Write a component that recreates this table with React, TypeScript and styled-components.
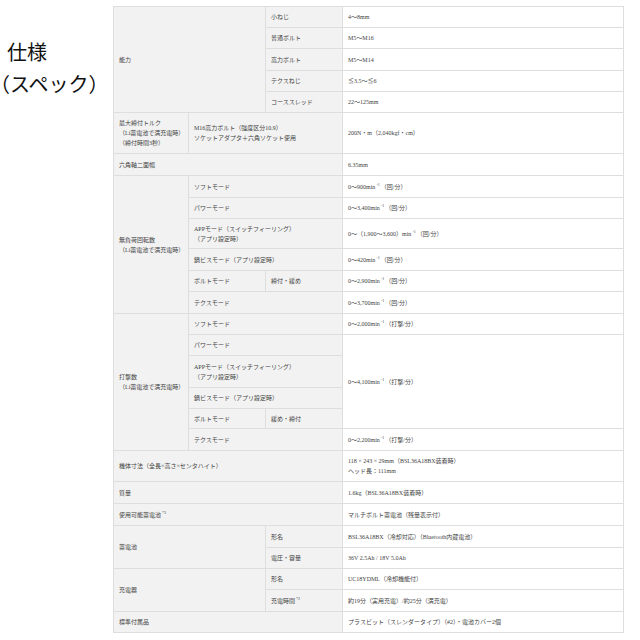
import React from "react";
import styled, { createGlobalStyle } from "styled-components";

const GlobalStyle = createGlobalStyle`
  html, body {
    margin: 0;
    padding: 0;
    background: #ffffff;
  }
`;

const Page = styled.div`
  display: flex;
  align-items: flex-start;
  width: 640px;
  height: 640px;
  overflow: hidden;
`;

const Heading = styled.h2`
  flex: 0 0 113px;
  margin: 0;
  padding: 36px 0 0 0;
  box-sizing: border-box;
  font-family: "Noto Sans CJK JP", sans-serif;
  font-size: 20px;
  font-weight: 400;
  line-height: 32px;
  color: #111111;
`;

const HeadingLine = styled.span<{ $indent?: number }>`
  display: block;
  white-space: nowrap;
  padding-left: ${(p) => p.$indent ?? 0}px;
`;

/* opening bracket without its leading blank half */
const Bracket = styled.span`
  font-feature-settings: "halt";
`;

const SpecTable = styled.table`
  margin-top: 6px;
  width: 510px;
  table-layout: fixed;
  border-collapse: collapse;
  font-family: "Liberation Serif", "Noto Sans CJK JP", serif;
  font-size: 6px;
  line-height: 10px;
  color: #444444;
`;

const Row = styled.tr<{ $h: number }>`
  height: ${(p) => p.$h}px;
`;

const Label = styled.th`
  background: #f2f2f2;
  border: 1px solid #dedede;
  font-weight: 400;
  text-align: left;
  vertical-align: middle;
  padding: 0 5px;
  white-space: nowrap;
`;

const Value = styled.td`
  background: #ffffff;
  border: 1px solid #dedede;
  vertical-align: middle;
  padding: 0 5px;
  white-space: nowrap;
`;

const Sup = styled.sup`
  font-size: 4px;
  line-height: 0;
  vertical-align: super;
  margin: 0 1px;
`;

const rpm = (v: string, unit: string) => (
  <>
    {v}min<Sup>-1</Sup>（{unit}）
  </>
);

const App: React.FC = () => {
  return (
    <Page>
      <GlobalStyle />
      <Heading>
        <HeadingLine $indent={7}>仕様</HeadingLine>
        <HeadingLine>
          <Bracket>（</Bracket>スペック）
        </HeadingLine>
      </Heading>
      <SpecTable>
        <colgroup>
          <col style={{ width: 75 }} />
          <col style={{ width: 77 }} />
          <col style={{ width: 77 }} />
          <col style={{ width: 281 }} />
        </colgroup>
        <tbody>
          <Row $h={21}>
            <Label colSpan={2} rowSpan={5}>能力</Label>
            <Label>小ねじ</Label>
            <Value>4～8mm</Value>
          </Row>
          <Row $h={21}>
            <Label>普通ボルト</Label>
            <Value>M5～M16</Value>
          </Row>
          <Row $h={22}>
            <Label>高力ボルト</Label>
            <Value>M5～M14</Value>
          </Row>
          <Row $h={21}>
            <Label>テクスねじ</Label>
            <Value>≦3.5～≦6</Value>
          </Row>
          <Row $h={21}>
            <Label>コーススレッド</Label>
            <Value>22～125mm</Value>
          </Row>

          <Row $h={41}>
            <Label>
              最大締付トルク
              <br />
              （Li蓄電池で満充電時）
              <br />
              （締付時間3秒）
            </Label>
            <Label colSpan={2}>
              M16高力ボルト（強度区分10.9）
              <br />
              ソケットアダプタ＋六角ソケット使用
            </Label>
            <Value>200N・m（2,040kgf・cm）</Value>
          </Row>

          <Row $h={22}>
            <Label colSpan={3}>六角軸二面幅</Label>
            <Value>6.35mm</Value>
          </Row>

          <Row $h={22}>
            <Label rowSpan={6}>
              無負荷回転数
              <br />
              （Li蓄電池で満充電時）
            </Label>
            <Label colSpan={2}>ソフトモード</Label>
            <Value>{rpm("0～900", "回/分")}</Value>
          </Row>
          <Row $h={21}>
            <Label colSpan={2}>パワーモード</Label>
            <Value>{rpm("0～3,400", "回/分")}</Value>
          </Row>
          <Row $h={30}>
            <Label colSpan={2}>
              APPモード（スイッチフィーリング）
              <br />
              （アプリ設定時）
            </Label>
            <Value>{rpm("0～（1,900～3,600）", "回/分")}</Value>
          </Row>
          <Row $h={22}>
            <Label colSpan={2}>鍋ビスモード（アプリ設定時）</Label>
            <Value>{rpm("0～420", "回/分")}</Value>
          </Row>
          <Row $h={21}>
            <Label>ボルトモード</Label>
            <Label>締付・緩め</Label>
            <Value>{rpm("0～2,900", "回/分")}</Value>
          </Row>
          <Row $h={22}>
            <Label colSpan={2}>テクスモード</Label>
            <Value>{rpm("0～3,700", "回/分")}</Value>
          </Row>

          <Row $h={21}>
            <Label rowSpan={6}>
              打撃数
              <br />
              （Li蓄電池で満充電時）
            </Label>
            <Label colSpan={2}>ソフトモード</Label>
            <Value>{rpm("0～2,000", "打撃/分")}</Value>
          </Row>
          <Row $h={21}>
            <Label colSpan={2}>パワーモード</Label>
            <Value rowSpan={4}>{rpm("0～4,100", "打撃/分")}</Value>
          </Row>
          <Row $h={32}>
            <Label colSpan={2}>
              APPモード（スイッチフィーリング）
              <br />
              （アプリ設定時）
            </Label>
          </Row>
          <Row $h={21}>
            <Label colSpan={2}>鍋ビスモード（アプリ設定時）</Label>
          </Row>
          <Row $h={20}>
            <Label>ボルトモード</Label>
            <Label>緩め・締付</Label>
          </Row>
          <Row $h={22}>
            <Label colSpan={2}>テクスモード</Label>
            <Value>{rpm("0～2,200", "打撃/分")}</Value>
          </Row>

          <Row $h={31}>
            <Label colSpan={3}>機体寸法（全長×高さ×センタハイト）</Label>
            <Value>
              118 × 243 × 29mm（BSL36A18BX装着時）
              <br />
              ヘッド長：111mm
            </Value>
          </Row>
          <Row $h={22}>
            <Label colSpan={3}>質量</Label>
            <Value>1.6kg（BSL36A18BX装着時）</Value>
          </Row>
          <Row $h={22}>
            <Label colSpan={3}>
              使用可能蓄電池<Sup>*3</Sup>
            </Label>
            <Value>マルチボルト蓄電池（残量表示付）</Value>
          </Row>

          <Row $h={22}>
            <Label colSpan={2} rowSpan={2}>蓄電池</Label>
            <Label>形名</Label>
            <Value>BSL36A18BX（冷却対応）（Bluetooth内蔵電池）</Value>
          </Row>
          <Row $h={21}>
            <Label>電圧・容量</Label>
            <Value>36V 2.5Ah / 18V 5.0Ah</Value>
          </Row>

          <Row $h={21}>
            <Label colSpan={2} rowSpan={2}>充電器</Label>
            <Label>形名</Label>
            <Value>UC18YDML（冷却機能付）</Value>
          </Row>
          <Row $h={22}>
            <Label>
              充電時間<Sup>*2</Sup>
            </Label>
            <Value>約19分（実用充電）/約25分（満充電）</Value>
          </Row>

          <Row $h={21}>
            <Label colSpan={3}>標準付属品</Label>
            <Value>プラスビット（スレンダータイプ）（#2）・電池カバー2個</Value>
          </Row>
        </tbody>
      </SpecTable>
    </Page>
  );
};

export default App;
